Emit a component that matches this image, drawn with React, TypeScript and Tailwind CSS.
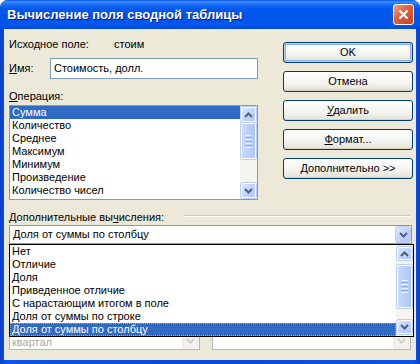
import React from "react";

function Chevron({ up, color = "#4D6185" }: { up?: boolean; color?: string }) {
  return (
    <svg width="9" height="6" viewBox="0 0 9 6">
      <path
        d={up ? "M1 5 L4.5 1.5 L8 5" : "M1 1 L4.5 4.5 L8 1"}
        fill="none"
        stroke={color}
        strokeWidth="2"
      />
    </svg>
  );
}

function SbButton({ up, h, disabled }: { up?: boolean; h: string; disabled?: boolean }) {
  return (
    <div
      className={
        disabled
          ? "flex items-center justify-center rounded-[2px] border border-[#E8E8E0] bg-[#F3F2EC] " + h
          : "flex items-center justify-center rounded-[2px] border border-[#FFFFFF] bg-[linear-gradient(135deg,#DCE7FE_0%,#C2D4FC_50%,#B2C8F7_100%)] shadow-[0_0_0_1px_#B9CCF5] " + h
      }
    >
      <Chevron up={up} color={disabled ? "#D4D2C8" : "#4D6185"} />
    </div>
  );
}

function Thumb({ h }: { h: string }) {
  return (
    <div
      className={
        "flex flex-col items-center justify-center gap-[1px] rounded-[2px] border border-[#FFFFFF] bg-[linear-gradient(90deg,#C9DAFD_0%,#BCD0FB_50%,#ADC5F6_100%)] shadow-[0_0_0_1px_#B9CCF5] " +
        h
      }
    >
      <div className="h-[1px] w-[7px] bg-[#EEF4FE]" />
      <div className="h-[1px] w-[7px] bg-[#8CB0F8]" />
      <div className="h-[1px] w-[7px] bg-[#EEF4FE]" />
      <div className="h-[1px] w-[7px] bg-[#8CB0F8]" />
      <div className="h-[1px] w-[7px] bg-[#EEF4FE]" />
      <div className="h-[1px] w-[7px] bg-[#8CB0F8]" />
      <div className="h-[1px] w-[7px] bg-[#EEF4FE]" />
    </div>
  );
}

function XPButton({ children, def }: { children: React.ReactNode; def?: boolean }) {
  return (
    <div
      className={
        def
          ? "flex h-[21px] items-center justify-center rounded-[3px] border border-[#003C74] bg-[linear-gradient(180deg,#FFFFFF_0%,#F4F3EE_60%,#E6E3D8_100%)] shadow-[inset_0_0_0_1px_#C7D8F7,inset_0_0_0_2px_#8AAAE8] text-[11px] text-black"
          : "flex h-[21px] items-center justify-center rounded-[3px] border border-[#003C74] bg-[linear-gradient(180deg,#FFFFFF_0%,#F4F3EE_60%,#E3DFD2_100%)] shadow-[inset_0_-1px_0_#D6D0C5] text-[11px] text-black"
      }
    >
      {children}
    </div>
  );
}

const ops = ["Количество", "Среднее", "Максимум", "Минимум", "Произведение", "Количество чисел"];
const calc = [
  "Нет",
  "Отличие",
  "Доля",
  "Приведенное отличие",
  "С нарастающим итогом в поле",
  "Доля от суммы по строке",
];

export default function App() {
  return (
    <div className="flex h-[364px] w-[420px] flex-col overflow-hidden rounded-t-[8px] bg-[linear-gradient(90deg,#0A3FC8_0%,#0C55E6_1.5%,#0A48DA_50%,#0C55E6_98.5%,#0A3FC8_100%)] font-['Liberation_Sans',Arial,sans-serif]">
      {/* Title bar */}
      <div className="flex h-[29px] shrink-0 items-center justify-between bg-[linear-gradient(180deg,#0A5AE8_0%,#3D8FFB_7%,#1F6FF5_14%,#0058EE_30%,#0054E6_60%,#0058EE_85%,#0049D4_100%)] pl-[7px] pr-[6px]">
        <span className="text-[13px] font-bold leading-[13px] text-white [text-shadow:1px_1px_0_#0A1883]">
          Вычисление поля сводной таблицы
        </span>
        <div className="flex h-[21px] w-[21px] items-center justify-center rounded-[3px] border border-white bg-[linear-gradient(135deg,#F0A080_0%,#E0603A_45%,#C8401A_100%)]">
          <svg width="11" height="11" viewBox="0 0 11 11">
            <path d="M1.5 1.5 L9.5 9.5 M9.5 1.5 L1.5 9.5" stroke="white" strokeWidth="2.2" />
          </svg>
        </div>
      </div>

      {/* Client */}
      <div className="mx-[4px] mb-[4px] flex flex-1 flex-col bg-[#ECE9D8] pl-[5px] pr-[3px] text-[11px] text-black">
        <div className="flex">
          {/* left column */}
          <div className="flex w-[249px] flex-col">
            <div className="mt-[8px] flex h-[15px] items-center">
              <span className="w-[105px]">Исходное поле:</span>
              <span>стоим</span>
            </div>
            <div className="mt-[6px] flex h-[21px] items-center">
              <span className="w-[41px]">
                <span className="underline">И</span>мя:
              </span>
              <div className="flex h-[21px] w-[208px] items-center border border-[#7F9DB9] bg-white pl-[3px]">
                Стоимость, долл.
              </div>
            </div>
            <div className="mt-[11px] h-[13px] leading-[13px]">
              <span className="underline">О</span>перация:
            </div>
            <div className="mt-[2px] flex h-[95px] border border-[#7F9DB9] bg-white">
              <div className="flex flex-1 flex-col">
                <div className="h-[13px] bg-[#316AC5] pl-[2px] leading-[13px] text-white">Сумма</div>
                {ops.map((o) => (
                  <div key={o} className="h-[13px] pl-[2px] leading-[13px]">
                    {o}
                  </div>
                ))}
              </div>
              <div className="flex w-[17px] flex-col bg-[#F5F4EF] px-[1px] py-[1px]">
                <SbButton up h="h-[15px]" />
                <Thumb h="mt-[1px] h-[36px]" />
                <div className="flex-1" />
                <SbButton h="h-[15px]" />
              </div>
            </div>
          </div>

          {/* right column */}
          <div className="ml-auto flex w-[130px] flex-col gap-[8px] pt-[13px]">
            <XPButton def>OK</XPButton>
            <XPButton>Отмена</XPButton>
            <XPButton>
              <span>
                <span className="underline">У</span>далить
              </span>
            </XPButton>
            <XPButton>
              <span>
                <span className="underline">Ф</span>ормат...
              </span>
            </XPButton>
            <XPButton>
              <span>
                <span className="underline">Д</span>ополнительно &gt;&gt;
              </span>
            </XPButton>
          </div>
        </div>

        {/* bottom section */}
        <div className="mt-[11px] flex h-[13px] leading-[13px]">
          <span>
            Дополнительные вы<span className="underline">ч</span>исления:
          </span>
          <div className="ml-auto mr-[3px] mt-[4px] h-[2px] w-[226px] border-t border-b border-t-[#D0D0BF] border-b-white" />
        </div>

        <div className="relative mt-[1px] mr-[1px] flex h-[19px] items-center border border-[#7F9DB9] bg-white">
          <span className="flex-1 pl-[3px]">Доля от суммы по столбцу</span>
          <div className="mr-[1px] flex h-[15px] w-[14px] items-center justify-center rounded-[2px] bg-[linear-gradient(135deg,#DCE7FE_0%,#C2D4FC_50%,#B2C8F7_100%)] shadow-[0_0_0_1px_#B9CCF5]">
            <Chevron color="#4D6185" />
          </div>

          {/* dropdown list overlay */}
          <div className="absolute left-[-1px] top-[18px] z-10 flex h-[93px] w-[405px] border border-black bg-white">
            <div className="flex flex-1 flex-col">
              {calc.map((c) => (
                <div key={c} className="h-[13px] pl-[2px] leading-[13px]">
                  {c}
                </div>
              ))}
              <div className="h-[13px] bg-[#316AC5] pl-[2px] leading-[13px] text-white outline-1 outline-dotted outline-offset-[-1px] outline-[#E8A040]">
                Доля от суммы по столбцу
              </div>
            </div>
            <div className="flex w-[17px] flex-col bg-[#F5F4EF] px-[1px] py-[2px]">
              <SbButton up h="h-[13px]" />
              <Thumb h="mt-[5px] h-[43px]" />
              <div className="flex-1" />
              <SbButton h="h-[14px]" />
            </div>
          </div>
        </div>

        <div className="mt-[24px] flex h-[82px]">
          <div className="flex w-[191px] border border-[#A9B8CF] bg-white">
            <div className="flex flex-1 flex-col justify-end pb-[1px] text-[#ACA899]">
              <div className="h-[11px] pl-[2px] leading-[11px]">квартал</div>
            </div>
            <div className="flex w-[17px] flex-col justify-end bg-[#F7F6F2] p-[1px]">
              <SbButton disabled h="h-[15px]" />
            </div>
          </div>
          <div className="ml-[12px] flex w-[199px] border border-[#A9B8CF] bg-white">
            <div className="flex-1" />
            <div className="flex w-[17px] flex-col justify-end bg-[#F7F6F2] p-[1px]">
              <SbButton disabled h="h-[15px]" />
            </div>
          </div>
        </div>
      </div>
    </div>
  );
}
